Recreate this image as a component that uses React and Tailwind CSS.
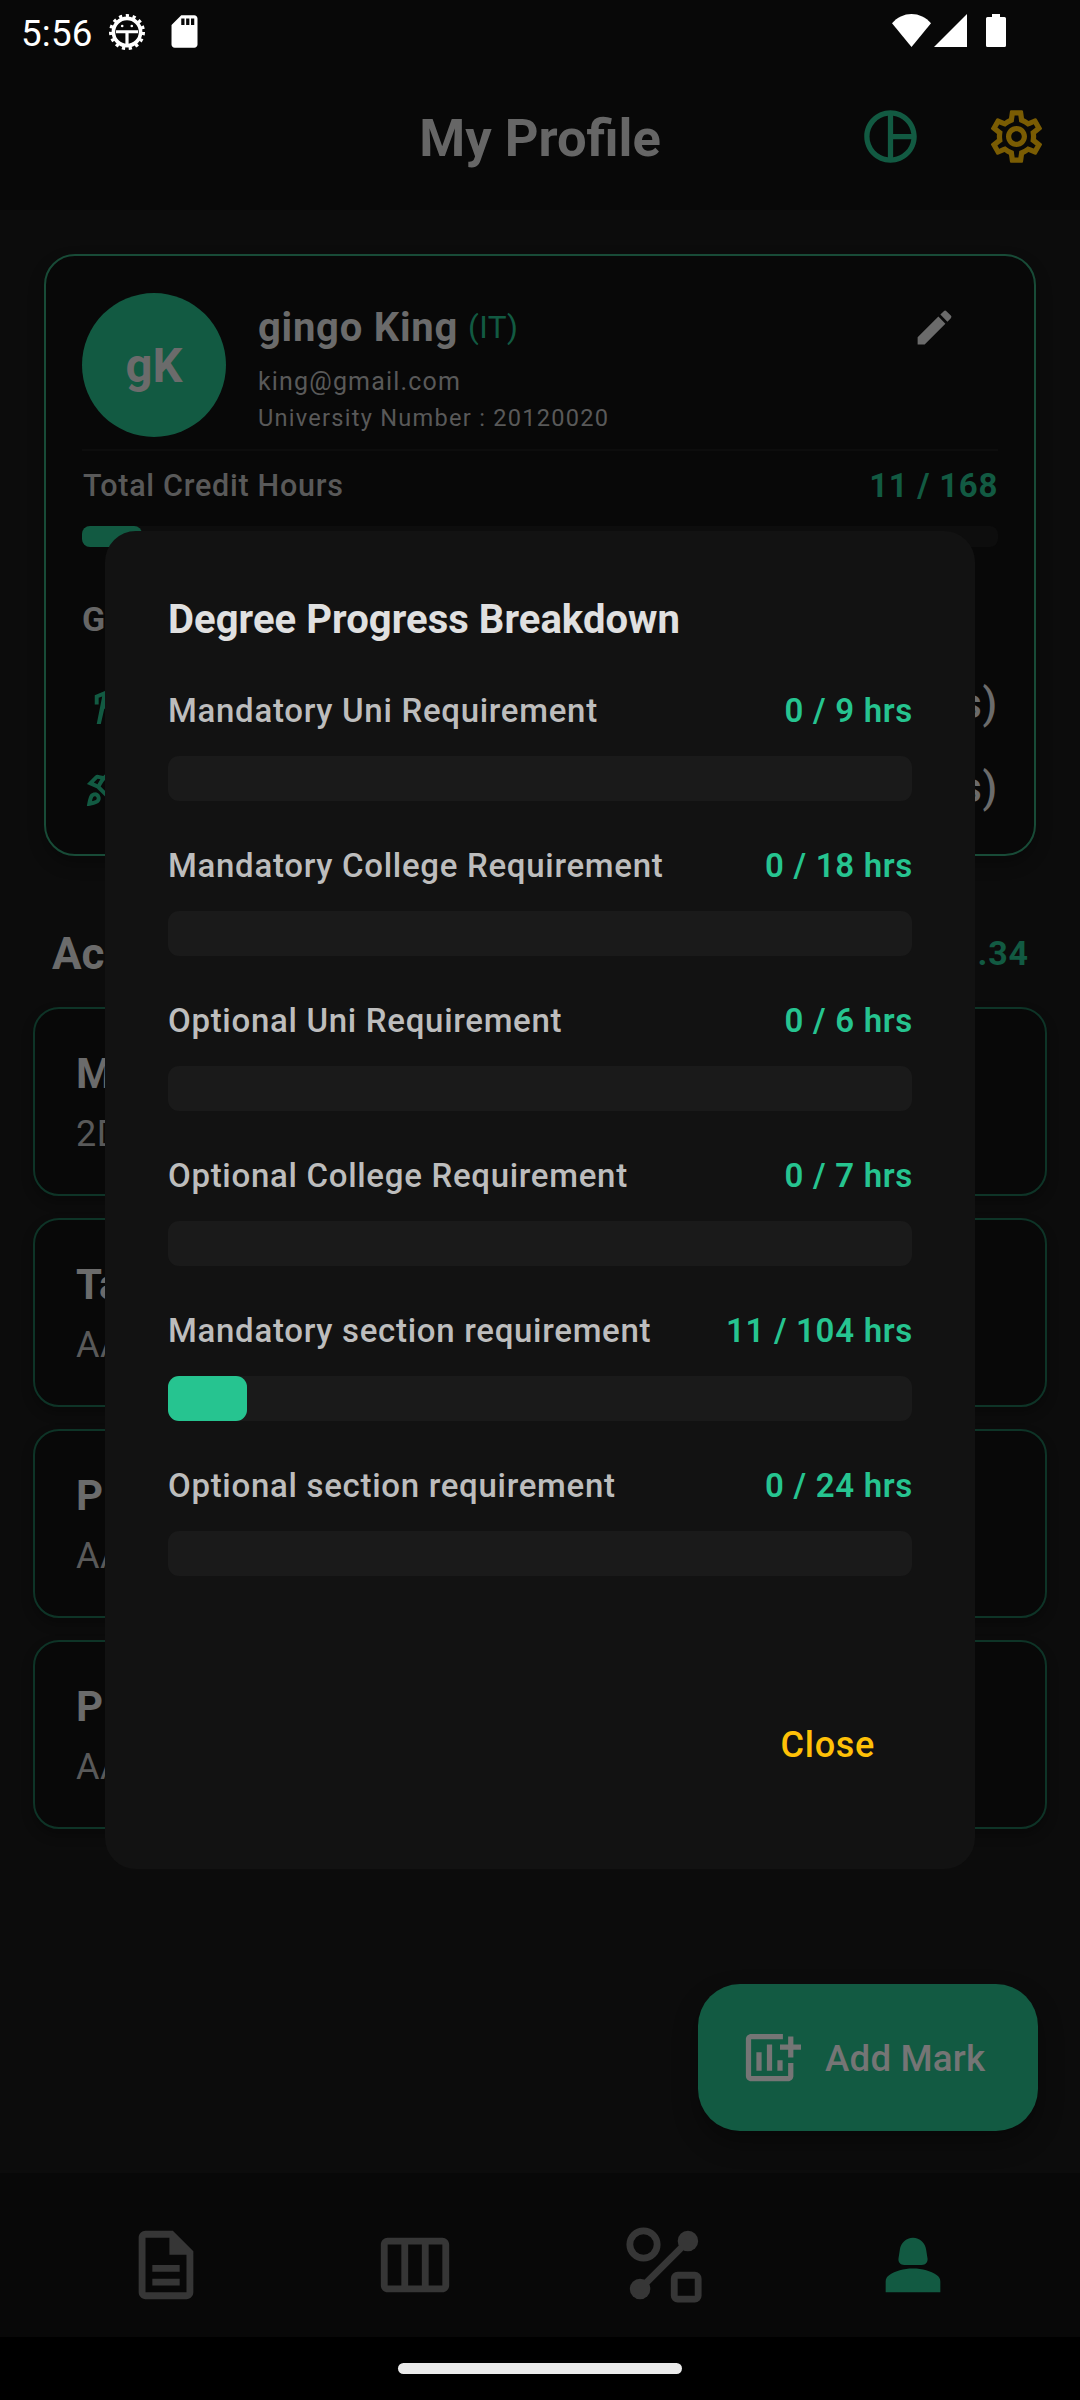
import React from "react";
import {
  MdPieChartOutline,
  MdOutlineSettings,
  MdEdit,
  MdDirectionsWalk,
  MdOutlineRocketLaunch,
  MdOutlineDescription,
} from "react-icons/md";

const requirements = [
  { label: "Mandatory Uni Requirement", done: 0, total: 9 },
  { label: "Mandatory College Requirement", done: 0, total: 18 },
  { label: "Optional Uni Requirement", done: 0, total: 6 },
  { label: "Optional College Requirement", done: 0, total: 7 },
  { label: "Mandatory section requirement", done: 11, total: 104 },
  { label: "Optional section requirement", done: 0, total: 24 },
];

const courses = [
  { name: "M", mark: "2D" },
  { name: "Ta", mark: "AA" },
  { name: "P", mark: "AA" },
  { name: "P", mark: "AA" },
];

function StatusBar() {
  return (
    <div className="flex h-16 items-start text-white">
      <span className="mt-[12px] ml-[21px] w-[88px] text-[36.75px] leading-[44px] tracking-[0.2px]">5:56</span>
      <svg className="mt-[12px] -ml-[2px] h-10 w-10" viewBox="0 0 40 40" fill="none">
        <circle cx="20" cy="20" r="13.6" stroke="white" strokeWidth="3.6" />
        <circle cx="20" cy="20" r="16.2" stroke="white" strokeWidth="3.6" strokeDasharray="3.2 3.586" />
        <path d="M9 18.2h22v3H21.6V32h-3.2V21.2H9z" fill="white" />
        <circle cx="15.2" cy="14" r="1.3" fill="white" />
        <circle cx="24.8" cy="14" r="1.3" fill="white" />
      </svg>
      <svg className="mt-[12px] ml-[18px] h-[39px] w-[39px]" viewBox="0 0 24 24" fill="white">
        <path d="M18 2h-8L4.02 8 4 20c0 1.1.9 2 2 2h12c1.1 0 2-.9 2-2V4c0-1.1-.9-2-2-2zm-6 6h-2V4h2v4zm3 0h-2V4h2v4zm3 0h-2V4h2v4z" />
      </svg>
      <div className="mr-[74px] ml-auto flex pt-[14px]">
        <svg className="h-[33px] w-[39px]" viewBox="0 0 39 33" fill="white">
          <path d="M0 9.3C5 3.4 12 0 19.5 0S34 3.4 39 9.3L19.5 33z" />
        </svg>
        <svg className="ml-[3px] h-[33px] w-[33px]" viewBox="0 0 33 33" fill="white">
          <path d="M33 0v33H0z" />
        </svg>
        <svg className="ml-[19px] h-[33px] w-[20px]" viewBox="0 0 20 33" fill="white">
          <path d="M6 0h8v3h4.500q1.500 0 1.500 1.500v27q0 1.500-1.500 1.500h-17Q0 33 0 31.500v-27Q0 3 1.500 3H6z" />
        </svg>
      </div>
    </div>
  );
}

function Header() {
  return (
    <header className="grid h-[146px] grid-cols-[1fr_auto_1fr] items-center pr-[32px]">
      <span />
      <h1 className="mt-[2px] ml-[32px] text-[52.5px] leading-[62px] font-bold text-[#666666]">My Profile</h1>
      <div className="-mt-[1px] flex justify-end gap-[63px]">
        <MdPieChartOutline className="size-[63px] text-[#125a42]" />
        <MdOutlineSettings className="size-[63px] text-[#7a5c03]" />
      </div>
    </header>
  );
}

function ProfileCard() {
  return (
    <section className="mx-[44px] mt-[44px] h-[602px] rounded-[31px] border-2 border-[#184b37] bg-[#080808] px-[36px] pt-[37px] shadow-[0_8px_16px_rgba(0,0,0,0.3)]">
      <div className="flex h-[144px] items-start">
        <div className="flex size-[144px] items-center justify-center rounded-full bg-[#125a42] pt-[2px] text-[47.25px] font-bold text-[#6b6b6b]">
          gK
        </div>
        <div className="ml-[32px] flex flex-col pt-[11px]">
          <div className="flex h-12 items-center">
            <span className="text-[40px] leading-[48px] font-bold tracking-[0.75px] text-[#6b6b6b]">gingo King</span>
            <span className="ml-[10px] text-[31.5px] leading-[48px] tracking-[0.4px] text-[#125a42]">(IT)</span>
          </div>
          <span className="mt-3 text-[25px] leading-[36px] tracking-[1.17px] text-[#595959]">king@gmail.com</span>
          <span className="text-[23.6px] leading-[36px] tracking-[1.25px] text-[#595959]">
            University Number : 20120020
          </span>
        </div>
        <MdEdit className="mt-[12px] mr-[41px] ml-auto size-[45px] text-[#6b6b6b]" />
      </div>
      <div className="mt-[12px] h-[2px] bg-[#0d0d0d]" />
      <div className="mt-[15px] flex items-center justify-between leading-[40px]">
        <span className="pl-px text-[30.5px] font-medium tracking-[0.72px] text-[#595959]">Total Credit Hours</span>
        <span className="text-[33px] font-bold tracking-[0.68px] text-[#125a42]">11 / 168</span>
      </div>
      <div className="mt-[20px] h-[21px] rounded-[8px] bg-[#0d0d0d]">
        <div className="h-full w-[60px] rounded-[8px] bg-[#125a42]" />
      </div>
      <div className="mt-[52px] text-[34px] leading-[40px] font-bold text-[#666666]">G</div>
      <div className="mt-[41px] flex items-center justify-between leading-[47px]">
        <MdDirectionsWalk className="-mt-[3px] ml-px size-[47px] text-[#125a42]" />
        <span className="text-[42px] font-medium tracking-[0.68px] text-[#6b6b6b]">s)</span>
      </div>
      <div className="mt-[36.5px] flex items-center justify-between leading-[47px]">
        <MdOutlineRocketLaunch className="-mt-[1px] ml-px size-[47px] text-[#125a42]" />
        <span className="text-[42px] font-medium tracking-[0.68px] text-[#6b6b6b]">s)</span>
      </div>
    </section>
  );
}

function Courses() {
  return (
    <section className="mt-[72px] px-[33px]">
      <div className="flex items-center justify-between pr-[18px] pl-[19px] leading-[52px] font-bold">
        <h2 className="text-[44px] text-[#6b6b6b]">Ac</h2>
        <span className="-mt-[2px] text-[34px] tracking-[0.9px] text-[#125a42]">.34</span>
      </div>
      <ul className="mt-[27px] flex flex-col gap-[22px]">
        {courses.map((course, index) => (
          <li
            key={index}
            className="flex h-[189px] flex-col rounded-[26px] border-2 border-[#0e3427] bg-[#080808] pt-[40px] pl-[41px] shadow-[0_6px_12px_rgba(0,0,0,0.3)]"
          >
            <span className="text-[42px] leading-[50px] font-bold text-[#6b6b6b]">{course.name}</span>
            <span className="mt-[13px] text-[36px] leading-[44px] tracking-[0.6px] text-[#595959]">{course.mark}</span>
          </li>
        ))}
      </ul>
    </section>
  );
}

function AddMarkButton() {
  return (
    <button className="mt-[155px] mr-[42px] flex h-[147px] w-[340px] items-center self-end rounded-[42px] bg-[#125a42] pl-[40px] text-[#757575] shadow-[0_12px_24px_rgba(0,0,0,0.35)]">
      <svg className="size-[63px] overflow-visible" viewBox="0 0 24 24" fill="currentColor">
        <path d="M17.100 3H5c-1.100 0-2 .9-2 2v14c0 1.100.9 2 2 2h14.100c1.100 0 2-.9 2-2v-4.900h-2V19H5V5h12.100z" />
        <path d="M7 10h2v7H7zM11 7h2v10h-2zM15 13h2v4h-2z" />
        <path d="M19.100 4h2v3H24v2h-2.900v3h-2V9H16V7h3.100z" />
      </svg>
      <span className="mt-[2px] ml-[24px] text-[36.75px] leading-[44px] font-medium tracking-[0.15px]">Add Mark</span>
    </button>
  );
}

function BottomNav() {
  return (
    <nav className="mt-[42px] flex h-[164px] items-start gap-[167px] bg-[#080808] pt-[50.5px] pl-[125px] text-[#363636]">
      <MdOutlineDescription className="size-[82px]" />
      <svg className="size-[82px]" viewBox="0 0 24 24" fill="currentColor" fillRule="evenodd">
        <path d="M4 4h16c1.100 0 2 .9 2 2v12c0 1.100-.9 2-2 2H4c-1.100 0-2-.9-2-2V6c0-1.100.9-2 2-2zm0 2v12h4V6zm6 0v12h4V6zm6 0v12h4V6z" />
      </svg>
      <svg className="size-[82px]" viewBox="0 0 24 24" fill="none" stroke="currentColor" strokeWidth="2">
        <circle cx="6" cy="6" r="4" />
        <circle cx="19" cy="5" r="3" fill="currentColor" stroke="none" />
        <circle cx="5" cy="19" r="3" fill="currentColor" stroke="none" />
        <path d="M5 19L19 5" />
        <rect x="15" y="15" width="7" height="7" rx="1" />
      </svg>
      <svg className="size-[82px] text-[#125a42]" viewBox="0 0 24 24" fill="currentColor">
        <path d="M12 4c2 0 3.600 1.500 3.850 3.500l.4 2.600c.15 1.050-.6 1.900-1.700 1.900h-5.100c-1.100 0-1.850-.85-1.700-1.900l.4-2.600C8.400 5.500 10 4 12 4z" />
        <path d="M4 20v-3.200c0-.85.4-1.500 1.100-1.900C6.800 13.700 9.200 13 12 13s5.200.7 6.900 1.900c.7.4 1.100 1.050 1.100 1.900V20z" />
      </svg>
    </nav>
  );
}

function DegreeDialog() {
  return (
    <div className="absolute top-[531px] left-[105px] flex h-[1338px] w-[870px] flex-col rounded-[31px] bg-[#121212] px-[63px] pt-[65px]">
      <h2 className="text-[40px] leading-[48px] font-bold tracking-[0.05px] text-[#e0e0e0]">
        Degree Progress Breakdown
      </h2>
      <div className="mt-[47px] flex flex-col gap-[45px]">
        {requirements.map((item) => (
          <div key={item.label} className="flex flex-col gap-[25px]">
            <div className="flex h-[40px] items-center justify-between text-[33px] leading-[40px]">
              <span className="font-medium tracking-[0.7px] text-[#bdbdbd]">{item.label}</span>
              <span className="-mr-px font-semibold tracking-[0.7px] text-[#26c490]">
                {item.done} / {item.total} hrs
              </span>
            </div>
            <div className="h-[45px] rounded-[11px] bg-[#1a1a1a]">
              <div
                className="h-full rounded-[11px] bg-[#26c490]"
                style={{ width: `${(item.done / item.total) * 100}%` }}
              />
            </div>
          </div>
        ))}
      </div>
      <button className="mt-[147px] mr-[37px] self-end text-[36px] leading-[44px] font-medium tracking-[0.7px] text-[#ffc107]">
        Close
      </button>
    </div>
  );
}

export default function App() {
  return (
    <div className="relative flex h-[2400px] w-[1080px] flex-col overflow-hidden bg-[#0c0c0c] font-[Roboto,sans-serif]">
      <div className="bg-[#080808]">
        <StatusBar />
        <Header />
      </div>
      <ProfileCard />
      <Courses />
      <AddMarkButton />
      <BottomNav />
      <div className="flex h-[63px] justify-center bg-black pt-[26px]">
        <div className="h-[10.5px] w-[284px] rounded-full bg-[#ebebeb]" />
      </div>
      <DegreeDialog />
    </div>
  );
}
